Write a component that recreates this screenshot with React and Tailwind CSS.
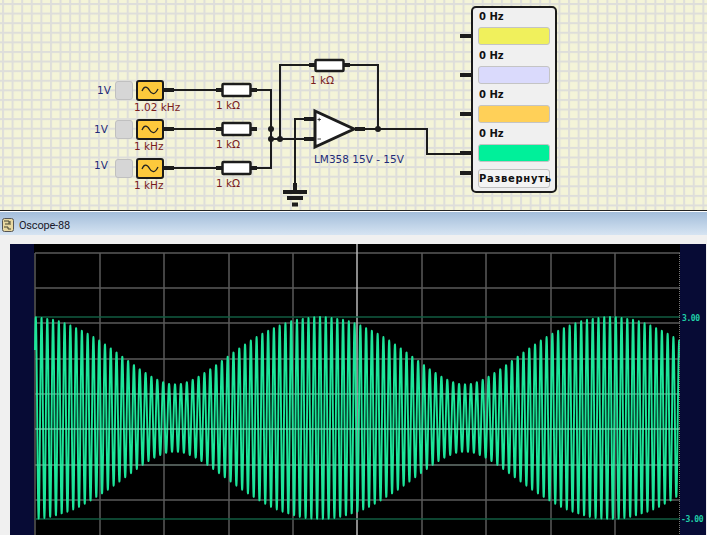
import React from 'react';

const font = "whitespace-nowrap leading-none font-['DejaVu_Sans',sans-serif] text-[10.500px]";

// sum of the three generators, peaks at x=30/320/610
const signal = () => {
  const w = (2 * Math.PI) / 5.8;
  let d = '';
  for (let x = 35; x <= 680; x += 0.2) {
    const u = x - 320;
    const y = 418 - 33.7 * (2 * Math.cos(w * u) + Math.cos(w * 1.02 * u));
    d += `${d ? 'L' : 'M'}${x.toFixed(1)} ${y.toFixed(1)}`;
  }
  return d;
};

const vLines = [100, 164, 229, 293, 422, 486, 551, 615];
const hLines = [288, 323, 359, 394, 429, 465, 500];

const sources = [
  { freq: '1.02 kHz', volt: 'pl-[3px] pt-[1px]' },
  { freq: '1 kHz', volt: 'pt-[1px]' },
  { freq: '1 kHz', volt: '-mt-[3px]' },
];

const meters = ['bg-[#f0f05c]', 'bg-[#dadafc]', 'bg-[#ffd058]', 'bg-[#00f09a]'];

function Source({ freq, volt }) {
  return (
    <div className="h-[39px] flex items-start">
      <span className={`w-[21px] pt-[5px] text-[#1f2c78] ${font} ${volt}`}>1V</span>
      <div className="w-[18px] h-[19px] mt-px rounded-[3px] bg-[#d6d6d6] border border-[#c0c0c0]" />
      <div className="ml-[3px] flex flex-col">
        <div className="w-[28px] h-[21px] rounded-[3px] bg-[#fdc93c] border-2 border-[#1a1a1a] flex items-center justify-center">
          <svg width="18" height="11" viewBox="0 0 18 11" fill="none" stroke="#222" strokeWidth="1.3">
            <path d="M1 6C3 1 6 1 8.5 5.500S14 10 17 4" />
          </svg>
        </div>
        <span className={`-ml-[2px] mt-[1px] text-[#7a1c1c] ${font}`}>{freq}</span>
      </div>
    </div>
  );
}

function Wires() {
  const stubs = [
    [163, 90, 174, 90], [163, 129, 174, 129], [163, 168, 174, 168],
    [216, 90, 222, 90], [216, 129, 222, 129], [216, 168, 222, 168],
    [251, 90, 257, 90], [251, 129, 257, 129], [251, 168, 257, 168],
    [309, 65, 315, 65], [343, 65, 350, 65],
    [304, 119, 314, 119], [304, 139, 314, 139], [355, 129, 365, 129],
    [295, 183, 295, 192],
    [460, 36, 471, 36], [460, 75, 471, 75], [460, 114, 471, 114], [460, 153, 471, 153], [460, 173, 471, 173],
  ];
  const resistors = [[222, 84], [222, 123], [222, 162]];
  return (
    <svg className="absolute inset-0" width="707" height="210" fill="none" stroke="#1c1c1c">
      <g strokeWidth="2">
        <path d="M174 90H257M174 129H257M174 168H257" />
        <path d="M257 90H271V168H257" />
        <path d="M271 139H304M280 139V65H309" />
        <path d="M350 65H378V129" />
        <path d="M304 119H295V183" />
        <path d="M365 129H427V154H460" />
      </g>
      <g strokeWidth="4">
        {stubs.map(([a, b, c, d], i) => <line key={i} x1={a} y1={b} x2={c} y2={d} />)}
        <path d="M283 192H307M287 198H303M292 204.500H298" />
      </g>
      <g fill="#1c1c1c" stroke="none">
        <circle cx="271" cy="129" r="3" />
        <circle cx="271" cy="139" r="3" />
        <circle cx="280" cy="139" r="3" />
        <circle cx="378" cy="129" r="3" />
      </g>
      <g fill="#fff" strokeWidth="2.500">
        {resistors.map(([x, y]) => <rect key={y} x={x + 0.500} y={y} width="28" height="12" rx="1" />)}
        <rect x="315.500" y="60" width="28" height="11" rx="1" />
      </g>
      <path d="M315 111L354 129L315 147Z" fill="#fff" strokeWidth="3" strokeLinejoin="miter" />
      <path d="M317.500 119.500H321M319.200 117.800V121.200M317.500 139H321" strokeWidth="0.800" />
    </svg>
  );
}

function FreqPanel() {
  return (
    <div className="absolute left-[471px] top-[6px] w-[86px] h-[187px] rounded-[5px] border-2 border-[#1a1a1a] bg-[#f0f0f0] px-[5px] flex flex-col gap-[2px]">
      {meters.map((color, i) => (
        <div key={i}>
          <div className="h-[19px] pl-px pt-[4px] text-[10px] leading-none font-bold text-[#111] font-['DejaVu_Sans',sans-serif]">0 Hz</div>
          <div className={`h-[18px] rounded-[3px] border border-[#c4c4c4] ${color}`} />
        </div>
      ))}
      <button className="mt-[5px] w-full h-[19px] rounded-[3px] bg-[#f4f4f4] border border-[#c0c0c0] text-[10px] leading-none font-bold tracking-[0.700px] whitespace-nowrap text-[#111] font-['DejaVu_Sans',sans-serif]">Развернуть</button>
    </div>
  );
}

function Circuit() {
  return (
    <div className="relative h-[210px] shrink-0 overflow-hidden bg-[#f4f4d8] bg-[linear-gradient(to_right,#dededa_1.500px,transparent_2.500px),linear-gradient(to_bottom,#dededa_1.500px,transparent_2.500px)] bg-[size:9.600px_9.600px] bg-[position:2px_3px]">
      <Wires />
      <div className="absolute left-[94px] top-[80px] flex flex-col">
        {sources.map((s, i) => <Source key={i} {...s} />)}
      </div>
      <div className={`absolute left-[216px] top-[100px] flex flex-col gap-[29px] text-[#7a1c1c] ${font}`}>
        <span className="h-[10px]">1 kΩ</span>
        <span className="h-[10px]">1 kΩ</span>
        <span className="h-[10px]">1 kΩ</span>
      </div>
      <span className={`absolute left-[310px] top-[75px] text-[#7a1c1c] ${font}`}>1 kΩ</span>
      <span className={`absolute left-[314px] top-[154px] text-[#1f2c78] ${font}`}>LM358 15V - 15V</span>
      <FreqPanel />
    </div>
  );
}

function Plot() {
  return (
    <svg className="block" width="646" height="291" viewBox="34 244 646 291" fill="none">
      <g stroke="#5a5a5a" strokeWidth="1.500">
        <path d="M35 253H680M35 253V535" />
        {vLines.map(x => <line key={x} x1={x} y1="253" x2={x} y2="535" />)}
        {hLines.map(y => <line key={y} x1="35" y1={y} x2="680" y2={y} />)}
      </g>
      <line x1="357" y1="244" x2="357" y2="535" stroke="#b8b8b8" strokeWidth="1.500" />
      <g stroke="#125c42" strokeWidth="1.500">
        <line x1="35" y1="317" x2="680" y2="317" />
        <line x1="35" y1="519" x2="680" y2="519" />
      </g>
      <path d={signal()} stroke="#1de59a" strokeWidth="1.900" strokeLinejoin="round" />
      <line x1="35" y1="429" x2="680" y2="429" stroke="#9cf0d0" strokeWidth="1" opacity="0.6" />
      <line x1="35" y1="394" x2="680" y2="394" stroke="#9cf0d0" strokeWidth="1" opacity="0.25" />
      <line x1="35" y1="465" x2="680" y2="465" stroke="#9cf0d0" strokeWidth="1" opacity="0.25" />
      <line x1="679.500" y1="253" x2="679.500" y2="535" stroke="#777" strokeWidth="1" strokeDasharray="1 1" />
    </svg>
  );
}

export default function App() {
  return (
    <div className="w-[707px] h-[535px] overflow-hidden flex flex-col bg-[#f0f0f0]">
      <Circuit />
      <div className="h-px shrink-0 bg-[#222]" />
      <div className="h-[24px] shrink-0 flex items-center gap-[5px] pl-[2px] pt-[3px] border-t border-white bg-gradient-to-b from-[#a3bdda] to-[#d6e4f2]">
        <svg width="12" height="14" viewBox="0 0 12 14">
          <rect x="0.500" y="0.500" width="11" height="13" rx="2" fill="#e8d8a0" stroke="#555" />
          <path d="M2 3H7V6H3M2 9H6V11H9M8 3V7" stroke="#443" strokeWidth="1" fill="none" />
        </svg>
        <span className="text-[11px] tracking-[-0.200px] leading-none text-[#1a1a2a] font-['Roboto',sans-serif]">Oscope-88</span>
      </div>
      <div className="flex-1 min-h-0 pl-[10px] pt-[9px] flex">
        <div className="w-[24px] h-full bg-[#070b35]" />
        <div className="w-[646px] h-full bg-black">
          <Plot />
        </div>
        <div className="relative w-[26px] h-full bg-[#070b35] text-[8px] tracking-[-0.400px] leading-none font-bold text-[#20d0a8] font-['DejaVu_Sans_Mono',monospace]">
          <span className="absolute left-[2px] top-[71px]">3.00</span>
          <span className="absolute left-[1px] top-[272px] whitespace-nowrap">-3.00</span>
        </div>
      </div>
    </div>
  );
}
